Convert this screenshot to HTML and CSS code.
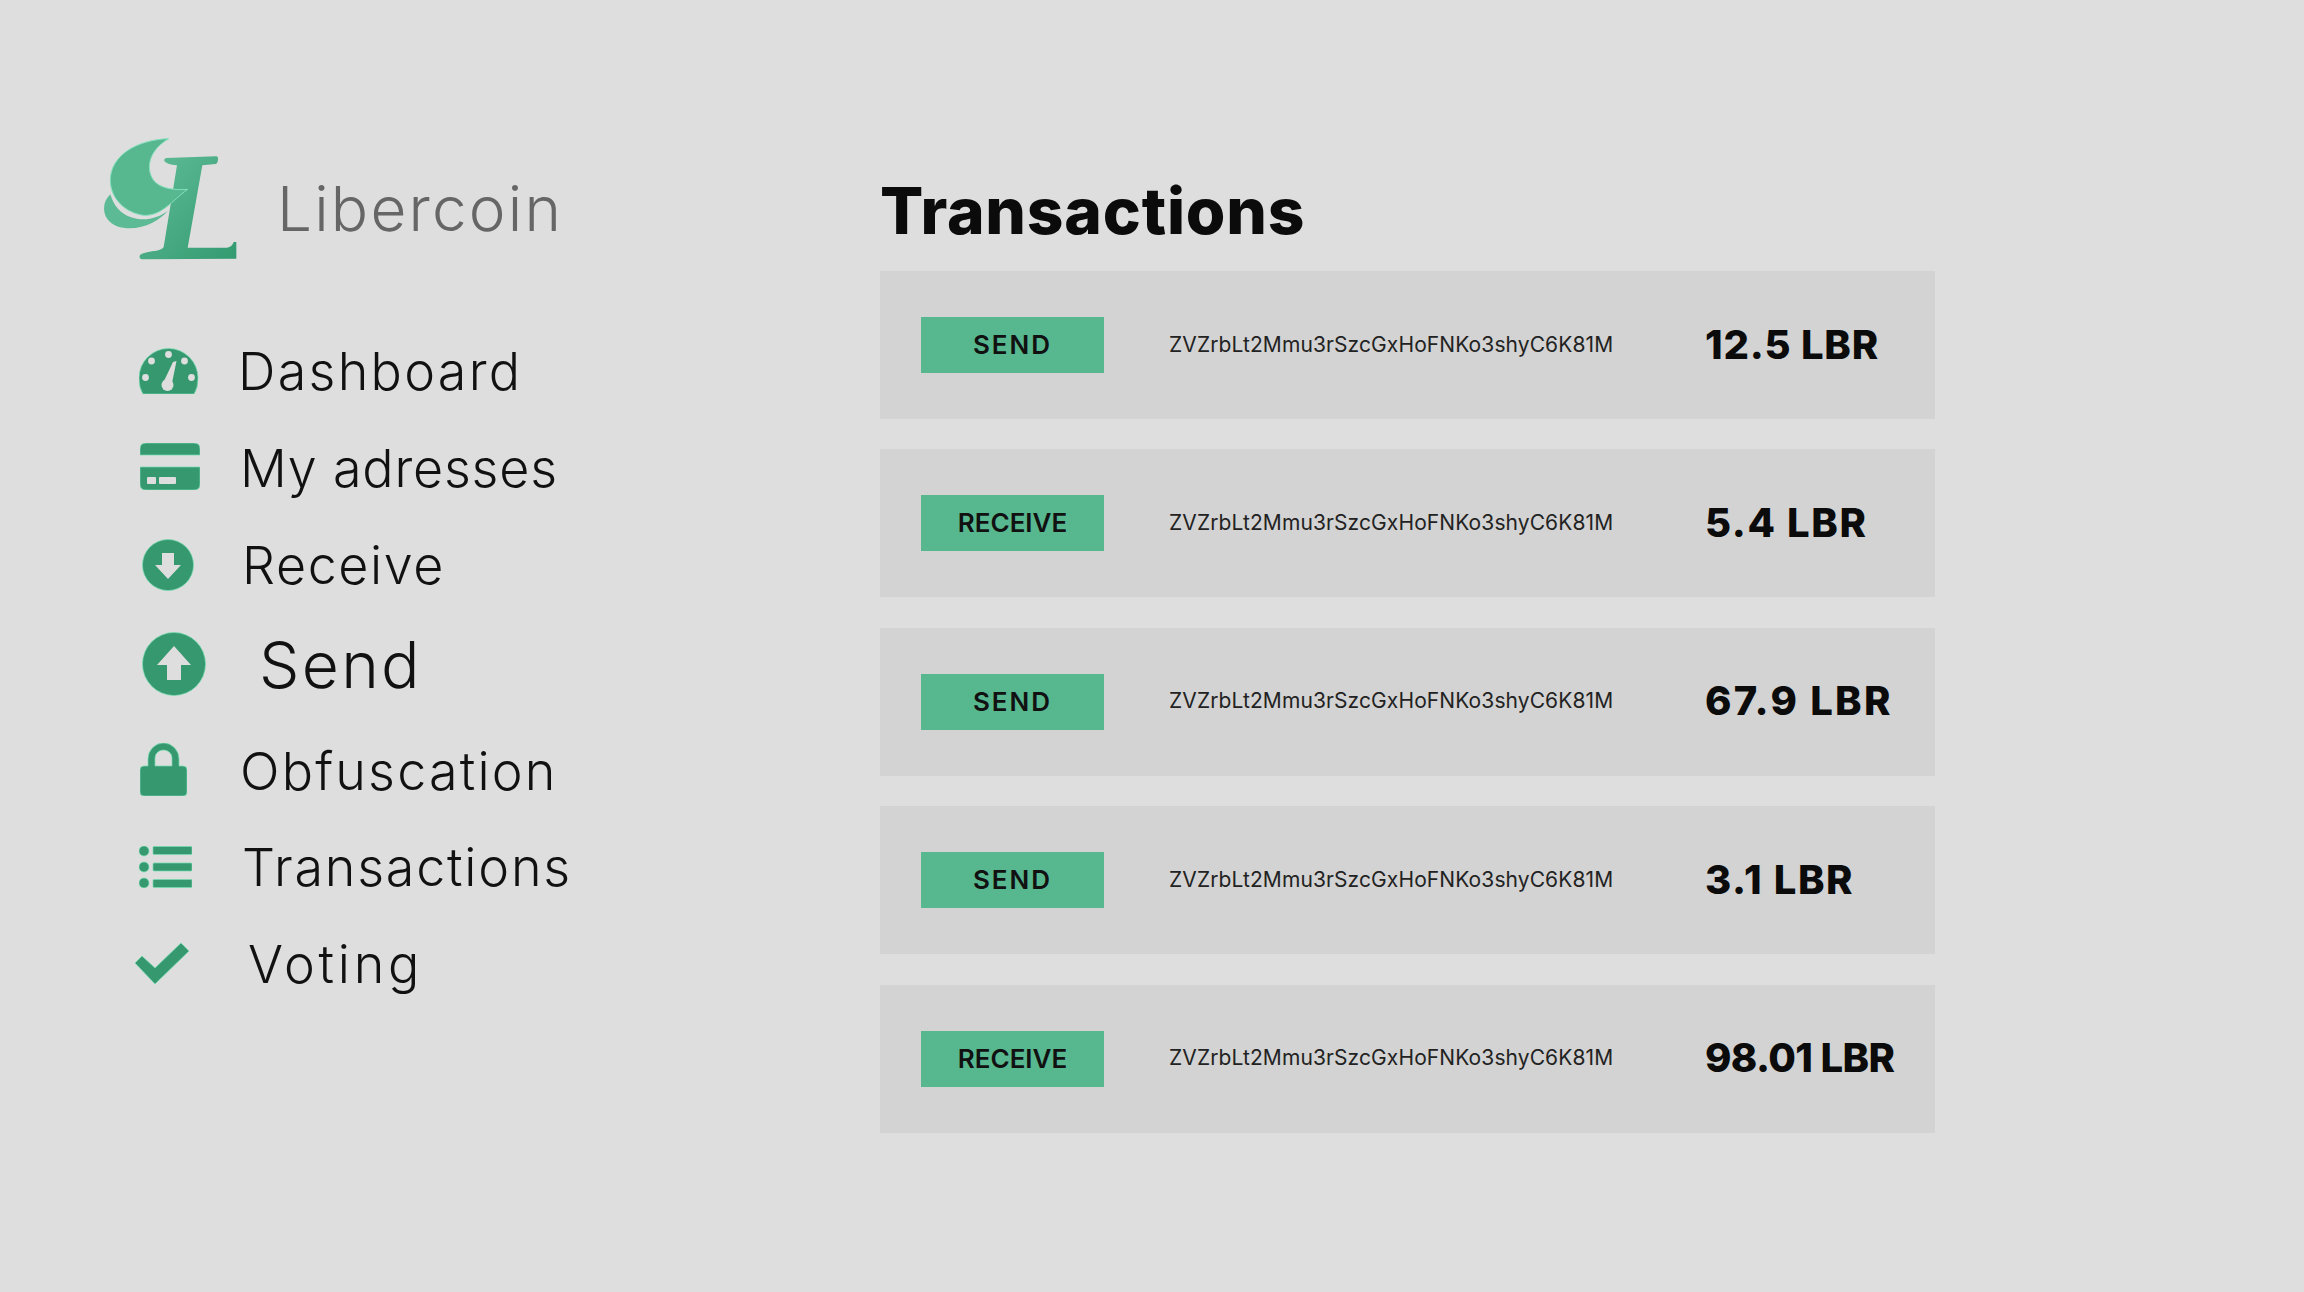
FILE: index.html
```html
<!DOCTYPE html>
<html lang="en">
<head>
  <meta charset="UTF-8" />
  <title>Libercoin - Transactions</title>
  <link rel="stylesheet" href="styles.css">
</head>
<body>
  <div class="page">
    <aside class="sidebar">
      <div class="brand">
        <svg class="brand-logo" viewBox="68 53 402 366" width="134" height="122">
          <defs>
            <linearGradient id="logo-fill" x1="0" y1="0" x2="1" y2="1">
              <stop offset="0" stop-color="#60bd98"/>
              <stop offset="1" stop-color="#339a70"/>
            </linearGradient>
          </defs>
          <path fill="url(#logo-fill)" d="M258 113 L408 108 Q414 108 413 118 Q412 130 405 131 L366 135 L322 382 L440 382 Q455 380 460 365 L468 365 L468 415 L186 417 Q176 416 178 406 Q182 398 215 393 Q245 390 250 380 L290 135 Q258 132 252 122 Q250 114 258 113 Z"/>
          <path fill="#5cbb95" d="M90 222 C60 250 65 300 110 318 C170 338 235 305 262 272 C230 295 190 305 150 290 C120 280 100 255 90 222 Z"/>
          <path fill="#57b890" stroke="#86e0bd" stroke-width="3" d="M265 55 C170 58 90 105 90 180 C90 235 135 278 190 285 C245 288 275 240 322 207 C280 210 240 205 220 180 C195 145 205 90 265 55 Z"/>
        </svg>
        <span class="brand-name">Libercoin</span>
      </div>
      <nav class="menu">
        <a class="menu-item">
          <svg class="menu-icon icon-dash" viewBox="0 0 60 46">
            <path d="M4 46 Q0 40 0 30 A29.5 29.5 0 0 1 59 30 Q59 40 55 46 Z"/>
            <g class="cut">
              <circle cx="29.5" cy="6.5" r="3.4"/>
              <circle cx="12.5" cy="13" r="3.4"/>
              <circle cx="45.5" cy="13" r="3.4"/>
              <circle cx="6.5" cy="29.5" r="3.4"/>
              <circle cx="52.5" cy="29.5" r="3.4"/>
              <circle cx="28.5" cy="37" r="6"/>
              <path d="M34 14 L37.5 13 L33 35 L25 33 Z"/>
            </g>
          </svg>
          <span class="menu-label label-dash">Dashboard</span>
        </a>
        <a class="menu-item">
          <svg class="menu-icon icon-card" viewBox="0 0 60 47">
            <path d="M6 0 H54 Q60 0 60 6 V12 H0 V6 Q0 0 6 0 Z"/>
            <path d="M0 24 H60 V41 Q60 47 54 47 H6 Q0 47 0 41 Z"/>
            <g class="cut">
              <rect x="7" y="34" width="9" height="7" rx="1"/>
              <rect x="19" y="34" width="17" height="7" rx="1"/>
            </g>
          </svg>
          <span class="menu-label label-card">My adresses</span>
        </a>
        <a class="menu-item">
          <svg class="menu-icon icon-down" viewBox="0 0 52 52">
            <circle cx="26" cy="26" r="25.5"/>
            <path class="cut" d="M20 14 H32 V26 H39 L26 40 L13 26 H20 Z"/>
          </svg>
          <span class="menu-label label-down">Receive</span>
        </a>
        <a class="menu-item menu-item-big">
          <svg class="menu-icon icon-up" viewBox="0 0 64 64">
            <circle cx="32" cy="32" r="31.5"/>
            <path class="cut" d="M32 14 L49 33 H39 V48 H25 V33 H15 Z"/>
          </svg>
          <span class="menu-label label-up">Send</span>
        </a>
        <a class="menu-item">
          <svg class="menu-icon icon-lock" viewBox="0 0 47 53">
            <path fill-rule="evenodd" d="M8 23 V16 A15.5 16 0 0 1 39 16 V23 H43 Q47 23 47 27 V49 Q47 53 43 53 H4 Q0 53 0 49 V27 Q0 23 4 23 Z M15 23 H32 V15 A8.5 8 0 0 0 15 15 Z"/>
          </svg>
          <span class="menu-label label-lock">Obfuscation</span>
        </a>
        <a class="menu-item">
          <svg class="menu-icon icon-list" viewBox="0 0 53 42">
            <circle cx="5" cy="5" r="5"/>
            <circle cx="5" cy="21" r="5"/>
            <circle cx="5" cy="37" r="5"/>
            <rect x="14" y="0.5" width="39" height="8" rx="1"/>
            <rect x="14" y="17" width="39" height="8" rx="1"/>
            <rect x="14" y="33.5" width="39" height="8" rx="1"/>
          </svg>
          <span class="menu-label label-list">Transactions</span>
        </a>
        <a class="menu-item">
          <svg class="menu-icon icon-check" viewBox="0 0 54 41">
            <path d="M0 20 L7 13 L20 25 L46 0 L54 8 L20 41 Z"/>
          </svg>
          <span class="menu-label label-check">Voting</span>
        </a>
      </nav>
    </aside>

    <main class="content">
      <h1 class="title">Transactions</h1>
      <div class="tx-list">
        <div class="tx">
          <span class="tx-type tx-send">SEND</span>
          <span class="tx-addr">ZVZrbLt2Mmu3rSzcGxHoFNKo3shyC6K81M</span>
          <span class="tx-amount">12.5 LBR</span>
        </div>
        <div class="tx">
          <span class="tx-type">RECEIVE</span>
          <span class="tx-addr">ZVZrbLt2Mmu3rSzcGxHoFNKo3shyC6K81M</span>
          <span class="tx-amount amount-loose">5.4 LBR</span>
        </div>
        <div class="tx">
          <span class="tx-type tx-send">SEND</span>
          <span class="tx-addr">ZVZrbLt2Mmu3rSzcGxHoFNKo3shyC6K81M</span>
          <span class="tx-amount amount-wide">67.9 LBR</span>
        </div>
        <div class="tx">
          <span class="tx-type tx-send">SEND</span>
          <span class="tx-addr">ZVZrbLt2Mmu3rSzcGxHoFNKo3shyC6K81M</span>
          <span class="tx-amount amount-loose">3.1 LBR</span>
        </div>
        <div class="tx">
          <span class="tx-type">RECEIVE</span>
          <span class="tx-addr">ZVZrbLt2Mmu3rSzcGxHoFNKo3shyC6K81M</span>
          <span class="tx-amount amount-tight">98.01 LBR</span>
        </div>
      </div>
    </main>
  </div>
</body>
</html>
```

FILE: styles.css
```css
body {
  font-family: Inter, "Liberation Sans", sans-serif;
  background-color: #dedede;
  color: #111;
  margin: 0;
}
.page {
  display: flex;
  min-height: 1292px;
}
.sidebar {
  width: 880px;
  box-sizing: border-box;
  padding-top: 138px;
}
.brand {
  display: flex;
  align-items: center;
  padding-left: 103px;
  margin-bottom: 65px;
}
.brand-name {
  margin: 18px 0 0 40px;
  font-size: 62px;
  font-weight: 300;
  color: #666;
  letter-spacing: 2.2px;
}
.menu {
  display: flex;
  flex-direction: column;
  padding-left: 135px;
}
.menu-item {
  display: flex;
  align-items: center;
  height: 96px;
}
.menu-item-big {
  height: 102px;
  margin-bottom: 8px;
}
.menu-icon {
  fill: #36986e;
  stroke: #74dcb2;
  stroke-width: 0.7;
  flex: none;
}
.menu-icon .cut {
  fill: #dedede;
  stroke: none;
}
.menu-label {
  font-size: 52px;
  font-weight: 300;
}
.icon-dash { width: 60px; height: 46px; margin: 0 0 5px 4px; }
.icon-card { width: 60px; height: 47px; margin: 0 0 5px 5px; }
.icon-down { width: 52px; height: 52px; margin-left: 7px; }
.icon-up { width: 64px; height: 64px; margin-left: 7px; }
.icon-lock { width: 47px; height: 53px; margin: 0 0 4px 5px; }
.icon-list { width: 53px; height: 42px; margin-left: 4px; }
.icon-check { width: 54px; height: 41px; }
.label-dash { margin-left: 39px; padding-bottom: 3px; letter-spacing: 2.3px; }
.label-card { margin-left: 40px; padding-bottom: 2px; letter-spacing: 0.8px; }
.label-down { margin-left: 48px; letter-spacing: 1.6px; }
.label-up { margin-left: 53px; font-size: 64px; letter-spacing: 2.3px; }
.label-lock { margin-left: 53px; letter-spacing: 2.2px; }
.label-list { margin-left: 50px; letter-spacing: 1.8px; }
.label-check { margin-left: 59px; padding-top: 2px; letter-spacing: 3.7px; }
.content {
  flex: 1;
  padding-top: 172px;
}
.title {
  margin: 0 0 22px;
  font-size: 64px;
  line-height: 77px;
  font-weight: 800;
  color: #0b0b0b;
  letter-spacing: 0.8px;
}
.tx-list {
  display: flex;
  flex-direction: column;
  gap: 30.4px;
  width: 1055px;
}
.tx {
  display: flex;
  align-items: center;
  height: 148px;
  padding-left: 41px;
  background-color: #d3d3d3;
}
.tx-type {
  width: 183px;
  height: 56px;
  line-height: 56px;
  text-align: center;
  background-color: #57b890;
  font-size: 26px;
  font-weight: 600;
}
.tx-send {
  letter-spacing: 2px;
}
.tx-addr {
  width: 601px;
  box-sizing: border-box;
  padding: 0 0 2px 65px;
  font-size: 21px;
  letter-spacing: 0.1px;
  color: #222;
}
.tx-amount {
  padding-bottom: 2px;
  font-size: 40px;
  font-weight: 800;
  letter-spacing: 0.8px;
  color: #0b0b0b;
}
.amount-loose {
  letter-spacing: 1.6px;
}
.amount-wide {
  letter-spacing: 2.3px;
}
.amount-tight {
  letter-spacing: -0.6px;
}
```
